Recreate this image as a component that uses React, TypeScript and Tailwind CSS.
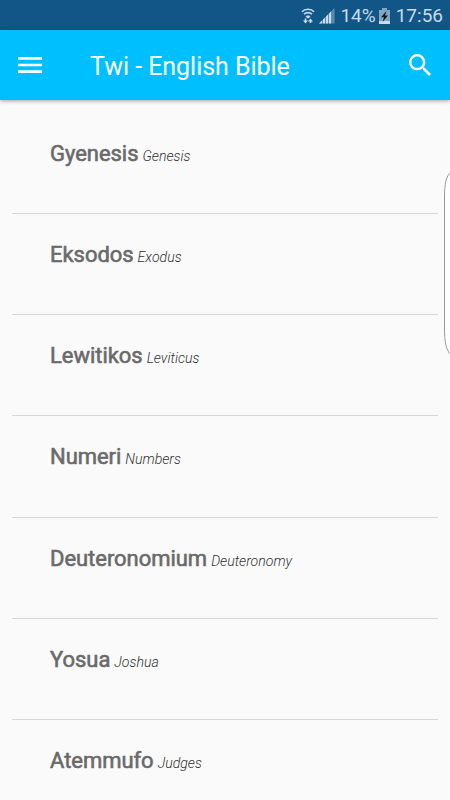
const books = [
  { twi: "Gyenesis", english: "Genesis" },
  { twi: "Eksodos", english: "Exodus" },
  { twi: "Lewitikos", english: "Leviticus" },
  { twi: "Numeri", english: "Numbers" },
  { twi: "Deuteronomium", english: "Deuteronomy" },
  { twi: "Yosua", english: "Joshua" },
  { twi: "Atemmufo", english: "Judges" },
];

function StatusBar() {
  return (
    <div className="flex h-[30px] items-center justify-end bg-[#125688] pr-[7px] pt-[2px] text-[#c9dcec]">
      <svg width="14" height="16" viewBox="0 0 14 16" fill="none" stroke="currentColor" className="mr-[4px]">
        <path d="M1 3.8C4 .3 10 .3 13 3.8M3 6.3c2-2.2 6-2.2 8 0" strokeWidth="1.6" />
        <path d="M4.8 8.6c1.2-1.3 3.2-1.3 4.4 0L7 10.2z" fill="currentColor" strokeWidth=".6" />
        <path d="M4.500 10.500v3M9.500 15v-3" strokeWidth="1.6" />
        <path d="M2 12.500h5L4.500 15.500zM7 13.500h5L9.500 10.500z" fill="currentColor" stroke="none" />
      </svg>
      <svg width="16" height="16" viewBox="0 0 16 16" fill="currentColor" className="mr-[5px]">
        <path d="M0 15.500L15.500 0v15.500z" opacity=".4" />
        <path d="M0 15.500L3 12.500v3zM4 15.500v-4L6 9.500v6zM7 15.500v-7L9 6.500v9zM10 15.500v-10L12 3.500v12z" />
      </svg>
      <span className="text-[19px]">14%</span>
      <svg width="11" height="16" viewBox="0 0 11 16" className="ml-[3px] mr-[6px]">
        <path d="M3 0h5v2h3v14H0V2h3z" fill="currentColor" opacity=".6" />
        <path d="M0 13h11v3H0z" fill="currentColor" />
        <path d="M7.500 3L2 9.200h3L3.500 14 9 7.500H6z" fill="#101820" />
      </svg>
      <span className="text-[19px]">17:56</span>
    </div>
  );
}

function AppBar() {
  return (
    <header className="flex h-[70px] items-center bg-[#00bfff] pl-[18px] pr-[19px] text-white shadow-[0_1px_4px_rgba(0,0,0,0.35)]">
      <svg width="24" height="16" viewBox="0 0 24 16" fill="currentColor">
        <path d="M0 0h24v2.700H0zM0 6.700h24v2.600H0zM0 13.300h24V16H0z" />
      </svg>
      <h1 className="ml-12 flex-1 pt-[3px] text-[25px] tracking-[-0.04px]">Twi - English Bible</h1>
      <svg width="22" height="22" viewBox="3 3 17.5 17.5" fill="currentColor">
        <path d="M15.500 14h-.79l-.28-.27A6.470 6.470 0 0 0 16 9.500 6.500 6.500 0 1 0 9.500 16c1.610 0 3.090-.59 4.230-1.570l.27.28v.79l5 4.990L20.490 19l-4.990-5zm-6 0C7.010 14 5 11.990 5 9.500S7.010 5 9.500 5 14 7.010 14 9.500 11.990 14 9.500 14z" />
      </svg>
    </header>
  );
}

interface BookRowProps {
  twi: string;
  english: string;
}

function BookRow({ twi, english }: BookRowProps) {
  return (
    <li className="h-[101.25px] shrink-0 border-b border-[#d8d8d8] pl-[38px] pt-[25px] leading-[32px] whitespace-nowrap">
      <span className="text-[22px] font-normal tracking-[-0.04px] text-[#6a6a6a] [-webkit-text-stroke:0.6px_#6a6a6a]">{twi}</span>
      <span className="ml-1 text-[14.1px] font-light italic text-[#333]">{english}</span>
    </li>
  );
}

export default function App() {
  return (
    <div className="relative flex h-[800px] w-[450px] flex-col overflow-hidden bg-[#fafafa] font-['Roboto',sans-serif]">
      <StatusBar />
      <AppBar />
      <ul className="flex flex-1 flex-col overflow-hidden px-3 pt-[12.6px]">
        {books.map((book) => (
          <BookRow key={book.english} twi={book.twi} english={book.english} />
        ))}
      </ul>
      {/* edge panel handle, cut off by the right side of the screen */}
      <svg className="absolute right-0 top-[170px]" width="7" height="188" viewBox="0 0 7 188" fill="#fff" stroke="#999">
        <path d="M8 2C3 6 1.500 14 1.500 28v130c0 14 1.500 22 6.500 27" />
      </svg>
    </div>
  );
}
